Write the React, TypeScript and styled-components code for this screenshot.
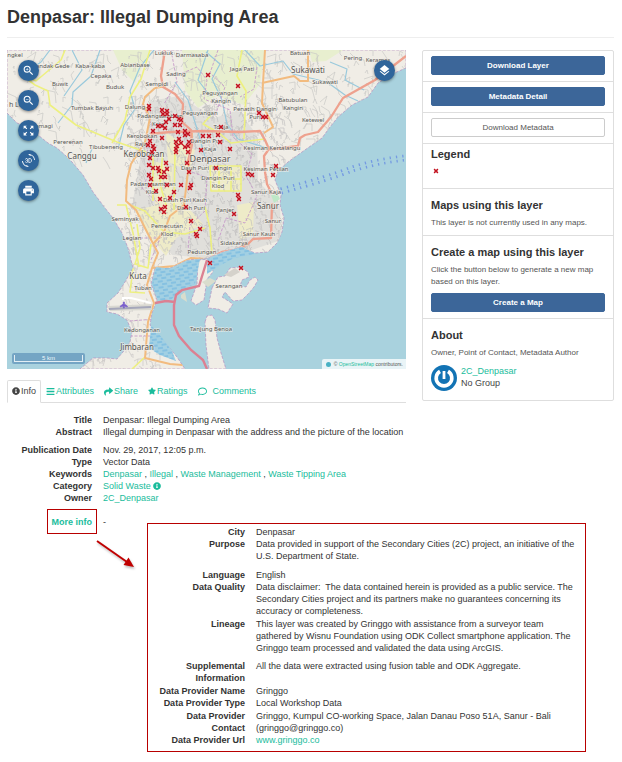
import React from 'react';
import styled, { createGlobalStyle } from 'styled-components';
import { MdZoomIn, MdZoomOut, MdZoomOutMap, Md3dRotation, MdPrint, MdLayers } from 'react-icons/md';
import { FaInfoCircle, FaBars, FaShare, FaStar, FaRegComment } from 'react-icons/fa';

const teal = '#1abc9c';
const blue = '#3c6699';
const line = '#dedede';
const red = '#b80000';

const GlobalStyle = createGlobalStyle`
  * { box-sizing: border-box; }
  body {
    margin: 0;
    background: #fff;
    color: #333;
    font-family: 'Liberation Sans', Arial, sans-serif;
    font-size: 9px;
    line-height: 12px;
  }
  a { color: ${teal}; text-decoration: none; }
`;

const Page = styled.main`
  padding: 6px 8px 8px 7px;
`;

const Title = styled.h1`
  margin: 0 0 12px;
  padding-bottom: 9px;
  border-bottom: 1px solid #eee;
  font-size: 18px;
  line-height: 22px;
`;

const Columns = styled.div`
  display: grid;
  grid-template-columns: minmax(0, 1fr) 192px;
  gap: 16px;
  align-items: start;
`;

const MapFrame = styled.section`
  position: relative;
  overflow: hidden;
`;

const MapCanvas = styled.svg`
  display: block;
  width: 100%;
  height: auto;
  font-family: 'Noto Sans', 'Open Sans', sans-serif;
`;

const ControlStack = styled.div<{ $side: 'left' | 'right' }>`
  position: absolute;
  top: 10px;
  ${(p) => p.$side}: 11px;
  display: flex;
  flex-direction: column;
  gap: 9px;
`;

const RoundButton = styled.button`
  display: flex;
  align-items: center;
  justify-content: center;
  width: 21px;
  height: 21px;
  padding: 0;
  border: 0;
  border-radius: 50%;
  background: #2f659b;
  color: #fff;
  font-size: 13px;
  box-shadow: 0 1px 3px rgba(0, 0, 0, 0.45);
`;

const ScaleBar = styled.div`
  position: absolute;
  left: 5px;
  bottom: 5px;
  width: 73px;
  padding: 2px;
  border-radius: 2px;
  background: #74a5c4;
  color: #eef6fa;
  font-size: 6px;
  line-height: 6px;
  text-align: center;
`;

const ScaleTick = styled.div`
  border: 1px solid #e2eef4;
  border-top: 0;
`;

const Attribution = styled.div`
  position: absolute;
  right: 0;
  bottom: 0;
  display: flex;
  align-items: center;
  gap: 3px;
  padding: 1px 3px 0 4px;
  border-radius: 2px 0 0 0;
  background: rgba(255, 255, 255, 0.75);
  color: #555;
  font-size: 5px;
  line-height: 9px;
`;

const Globe = styled.span`
  width: 5px;
  height: 5px;
  border-radius: 50%;
  background: #4ab1c4;
`;

const TabBar = styled.nav`
  display: flex;
  margin-top: 11px;
  border-bottom: 1px solid ${line};
`;

const Tab = styled.a<{ $active?: boolean }>`
  display: flex;
  align-items: center;
  gap: 1px;
  height: 23px;
  margin-bottom: -1px;
  padding: 0 4px 1px;
  border: 1px solid ${(p) => (p.$active ? line : 'transparent')};
  border-bottom-color: ${(p) => (p.$active ? '#fff' : 'transparent')};
  border-radius: 2px 2px 0 0;
  color: ${(p) => (p.$active ? '#444' : teal)};
`;

const Details = styled.dl`
  margin: 0;
`;

const InfoDetails = styled(Details)`
  margin-top: 11px;
`;

const Row = styled.div<{ $label: number; $after?: number }>`
  display: grid;
  grid-template-columns: ${(p) => p.$label}px minmax(0, 1fr);
  column-gap: 11px;
  margin-bottom: ${(p) => p.$after ?? 0}px;
`;

const Term = styled.dt`
  font-weight: bold;
  text-align: right;
`;

const Value = styled.dd`
  margin: 0;
  white-space: pre-line;
  svg { vertical-align: -1px; }
`;

const Sidebar = styled.aside`
  border: 1px solid ${line};
  border-radius: 2px;
`;

const Panel = styled.section<{ $kind?: 'action' | 'legend' | 'about' }>`
  padding: ${(p) =>
    p.$kind === 'action' ? '5px 8px 6px' : p.$kind === 'legend' ? '2px 8px 8px' : p.$kind === 'about' ? '8px 8px 9px' : '8px 8px 6px'};
  color: #555;
  & + & { border-top: 1px solid ${line}; }
`;

const Heading = styled.h2`
  margin: 0 0 4px;
  color: #333;
  font-size: 11px;
  line-height: 16px;
`;

const Text = styled.p`
  margin: 0;
  font-size: 8px;
`;

const Action = styled.button<{ $plain?: boolean }>`
  display: block;
  width: 100%;
  height: 19px;
  padding: 0;
  border: 1px solid ${(p) => (p.$plain ? '#ccc' : blue)};
  border-radius: 2px;
  background: ${(p) => (p.$plain ? '#fff' : blue)};
  color: ${(p) => (p.$plain ? '#555' : '#fff')};
  font: inherit;
  font-size: 8px;
  font-weight: ${(p) => (p.$plain ? 'normal' : 'bold')};
  ${Text} + & { margin-top: 5px; }
`;

const LegendIcon = styled.svg`
  display: block;
  width: 6px;
  height: 6px;
  margin: 6px 2px;
`;

const Owner = styled.div`
  display: flex;
  gap: 4px;
  margin-top: 6px;
  color: #444;
`;

const Avatar = styled.svg`
  width: 26px;
  height: 26px;
`;

const OwnerName = styled.div`
  display: flex;
  flex-direction: column;
`;

const MoreArea = styled.section`
  display: grid;
  grid-template-columns: 140px minmax(0, 1fr);
  margin: 5px 28px 0 0;
`;

const MoreSide = styled.div`
  padding-left: 40px;
`;

const MoreLine = styled.div`
  display: flex;
  align-items: center;
  gap: 6px;
`;

const MoreLink = styled.a`
  width: 50px;
  padding: 6px 4px 5px 0;
  border: 1px solid ${red};
  font-weight: bold;
  text-align: right;
`;

const Arrow = styled.svg`
  display: block;
  width: 46px;
  height: 36px;
  margin: 4px 0 0 47px;
  filter: drop-shadow(1px 2px 1px rgba(0, 0, 0, 0.25));
`;

const Callout = styled.div`
  margin-top: 14px;
  padding: 2px 2px 5px 8px;
  border: 1px solid ${red};
`;

const markers: Array<[number, number]> = [
  [208, 75], [149, 106], [149, 109], [162, 110], [167, 111], [163, 114], [167, 114], [175, 116], [181, 120],
  [169, 119], [179, 119], [166, 122], [175, 125], [180, 125], [158, 126], [162, 126], [165, 128], [153, 131],
  [162, 138], [178, 132], [185, 131], [188, 134], [185, 135], [203, 136], [209, 136], [179, 139], [150, 141],
  [148, 145], [153, 146], [154, 149], [152, 152], [176, 142], [181, 143], [177, 146], [176, 149], [176, 152],
  [185, 147], [189, 142], [188, 146], [188, 152], [201, 150], [150, 158], [149, 165], [166, 163], [187, 163],
  [153, 168], [158, 168], [159, 171], [167, 169], [164, 172], [189, 172], [149, 175], [151, 179], [161, 177],
  [165, 177], [150, 185], [167, 185], [181, 185], [191, 185], [190, 188], [156, 191], [174, 192], [160, 199],
  [170, 198], [161, 209], [165, 207], [186, 207], [164, 212], [191, 221], [200, 229], [196, 234], [197, 236],
  [238, 86], [259, 113], [263, 117], [266, 117], [221, 127], [218, 135], [220, 142], [230, 149], [216, 168],
  [248, 174], [252, 175], [276, 166], [273, 175], [238, 195], [239, 199], [234, 214], [210, 263], [241, 268],
];

const places: Array<[string, number, number, number?]> = [
  ['ngkel', 15, 57], ['Lukluk', 164, 55], ['Darmasaba', 192, 57], ['Batuan', 300, 55], ['Pering', 353, 60],
  ['Keramas', 378, 62], ['Pandak Gede', 51, 68], ['Kaba-kaba', 90, 68], ['Abianbase', 135, 67],
  ['Sading', 176, 76], ['Cepaka', 101, 78], ['Jaga Pati', 242, 71], ['Sukawati', 308, 73, 8],
  ['Sukawati', 325, 84], ['Buwit', 60, 86], ['Buduk', 115, 89], ['Sempidi', 157, 86],
  ['Peguyangan', 220, 95], ['Kangin', 221, 103], ['Penatih Dangin', 255, 111], ['Puri', 255, 119],
  ['Batubulan', 293, 102], ['Kangin', 293, 110], ['Tumbak Bayuh', 92, 110], ['Dalung', 135, 109],
  ['Peguyangan', 200, 115], ['Padangsambian', 160, 118], ['Kaja', 158, 126], ['Ketewel', 313, 122],
  ['h Lo', 16, 107, 7], ['emagi', 44, 128], ['Pererenan', 68, 144], ['Kerobokan', 142, 138],
  ['Raja', 141, 146], ['Tibubeneng', 106, 149], ['Tonja', 221, 129], ['Dangin Puri', 207, 143],
  ['Kaja', 210, 151], ['Canggu', 82, 159, 8], ['Kerobokan', 144, 157, 8], ['Denpasar', 210, 162, 9],
  ['Kesiman Kertalangu', 272, 150], ['Dauh Puri', 195, 170], ['Kangin', 222, 170], ['Kesiman Petilan', 266, 171],
  ['Dangin Puri', 218, 180], ['Klod', 218, 188], ['Padangsambian', 153, 186], ['Klod', 152, 194],
  ['Dauh Puri Kauh', 185, 202], ['Dauh Puri', 191, 210], ['Sanur Kaja', 266, 194], ['Sanur', 268, 209, 8],
  ['Panjer', 225, 212], ['Sanur', 273, 223], ['Seminyak', 125, 221], ['Pemecutan', 167, 228],
  ['Klod', 167, 236], ['Legian', 132, 240], ['Sanur Kauh', 259, 236], ['Sidakarya', 234, 245],
  ['Pedungan', 202, 254], ['Kuta', 138, 279, 8], ['Tuban', 143, 290], ['Serangan', 229, 288],
  ['Kedonganan', 142, 332], ['Jimbaran', 137, 350, 8], ['Tanjung Benoa', 211, 331],
];

const mainland =
  'M7 50V113L17 123L30 128L38 135L48 143L57 148L65 155L72 162L83 175L93 192L105 208L113 218L122 233L128 248L133 268L125 282L118 293L107 303V312L117 314L127 320L132 332L130 342L123 352L117 359L107 358L93 358L80 369H185L177 357L167 345L157 334L150 325L152 313L157 300L151 284L155 268L170 268L187 260L207 258L222 252L240 247L255 253L268 252L277 243L282 232L284 218L280 205L281 195L275 180L278 171L288 162L302 152L322 138L330 127L338 117L352 105L368 97L378 83L392 74L406 68V50Z';
const serangan =
  'M212 288L218 277L225 276L230 268L240 267L248 272L249 277L242 280L240 286L246 287L250 280L255 277L258 280L254 287L249 293L242 300L233 301L225 292L222 297L233 304L227 313L218 309L208 308Z';
const benoa = 'M205 322L207 316L212 315L215 320L217 338L221 353L226 369H209L206 345Z';
const harbour = 'M198 260L211 259L213 272L207 279L204 300L196 305L191 301L197 284Z';
const mangroves = 'M156 267L174 269L188 261L200 259L195 284L180 290L170 301L158 300L152 284ZM151 325L163 339L172 351L176 361L160 355L149 348ZM207 260L222 253L242 247L256 254L234 258L219 266L207 274Z';

const redRoads =
  'M165 50L161 76L163 87L175 94L183 104L182 122L191 130L192 145L187 165M150 134L170 132L205 131L240 132L260 131L265 140L269 149L264 156L265 172L267 184L272 194M267 150L298 146L300 138L305 135L318 132L331 117L343 98L375 80L406 56M206 260L222 252L235 250L248 244L253 239L271 238L272 203';
const orangeRoads =
  'M155 88L145 97L143 104L150 118L145 142L131 164L127 180L126 201L136 210L147 232L158 253L152 268L147 285L154 303L148 322L145 358L170 364L207 367M155 88L166 86M152 268L175 266L191 258L207 259M265 50L263 83L262 103L273 127L264 133M262 83L294 76L300 81L308 81L308 50M192 133L190 155L187 180L184 205L170 216L164 232L153 244';
const yellowRoads =
  'M65 50L61 60L36 81L22 75L35 85L48 91L50 105L76 125L117 142L146 152M112 143L125 120L130 97L141 79L150 50M117 205L126 205L133 233L139 267M130 205L145 211L164 232L185 234L205 228M137 224L140 248L135 264L148 268L151 244M205 207L210 228L212 255M242 50L237 76L246 91L244 139M211 115L203 124L219 133L231 143L265 139M210 166L241 166V191L211 191ZM219 166V191M231 166V191M211 179H241M145 357L132 369M133 268L130 292L145 293M153 150V201M163 152L160 184L166 205M175 150L174 210';
const rivers =
  'M100 50L91 76L73 92L72 105L58 123M154 50L140 67L130 91L135 109L124 125L118 149M50 50L41 62L34 67M206 52L220 64L212 79L222 100L227 124L238 139L270 149M245 50L260 66L283 61L293 74L327 82L345 95L358 101M330 62L347 69L345 80L364 90M175 82L188 100L198 132L205 157M72 50L82 70L64 96M208 50L198 80L210 96M92 149L86 163';

let seed = 41;
const random = () => {
  seed = (seed * 16807) % 2147483647;
  return seed / 2147483647;
};

const streets = (count: number, x: number, y: number, w: number, h: number, size: number) => {
  let d = '';
  for (let i = 0; i < count; i += 1) {
    const sx = Math.round(x + random() * w);
    const sy = Math.round(y + random() * h);
    const a = Math.round((random() - 0.3) * size);
    const b = Math.round((random() - 0.5) * size);
    d += `M${sx} ${sy}l${a} ${b}l${Math.round(b / 2)} ${Math.abs(a) + 2}`;
  }
  return d;
};

const countryStreets = streets(420, 7, 50, 400, 110, 13);
const cityStreets = streets(850, 125, 95, 158, 165, 7);
const southStreets = streets(190, 85, 205, 80, 165, 8);

const Cross = ({ x, y }: { x: number; y: number }) => (
  <g>
    <rect x={x - 2} y={y - 2} width="4" height="4" fill="#e08080" opacity="0.6" />
    <path d={`M${x - 2} ${y - 2}l4 4m0 -4l-4 4`} stroke="#c2101f" strokeWidth="1.1" />
  </g>
);

const CityMap = () => (
  <MapCanvas viewBox="7 50 399 319" role="img" aria-label="Map of Denpasar">
    <defs>
      <clipPath id="land"><path d={mainland} /></clipPath>
      <pattern id="wetland" width="9" height="6" patternUnits="userSpaceOnUse" patternTransform="rotate(-8)">
        <path d="M0 1h5M4 4h5" stroke="#5aa9de" strokeWidth="0.8" />
      </pattern>
    </defs>
    <path d="M7 50h399v319H7Z" fill="#a9d2de" />
    <g fill="#f0ede6" stroke="#b58fc0" strokeWidth="0.7" strokeDasharray="3 1.5">
      <path d={mainland} />
      <path d={serangan} />
      <path d={benoa} />
      <path d={harbour} />
    </g>
    <g clipPath="url(#land)" fill="none" strokeLinejoin="round">
      <path d="M182 50H265L260 84L244 105L216 96L198 108L185 90ZM309 50H343L326 61L312 62ZM113 50H150L135 83L122 70Z" fill="#e8efcf" />
      <path d="M150 101L179 96L215 118L238 110L257 135L258 181L280 204L281 240L252 250L206 258L172 255L146 222L132 206L140 160L146 141Z" fill="#e0dfdb" />
      <path d="M137 210L180 199L203 224L176 238L166 256L145 230ZM237 205L254 202L253 235L240 240ZM154 161L173 167L171 208L155 208ZM211 166H241V191H211ZM166 133L195 150L190 171L168 162Z" fill="#eeebc8" />
      <path d={countryStreets} stroke="#c9c8c5" strokeWidth="0.7" />
      <path d={cityStreets} stroke="#c3c2c1" strokeWidth="0.7" />
      <path d={southStreets} stroke="#cac7c5" strokeWidth="0.7" />
      <path d={rivers} stroke="#99c9dc" strokeWidth="1.2" />
      <path d="M178 75L197 67L207 80L204 99L230 110L233 137L252 154L246 176L257 196L245 223L226 218L218 241M142 104L154 130L147 152L152 168L142 188L159 204M171 50L177 82L164 104M218 50L210 73L225 87L215 116M188 171L207 177L205 211L190 225L188 251M122 238H160L151 260M130 321L155 319M130 336H151M257 67L254 89L240 97" stroke="#c69ac9" strokeWidth="0.9" strokeDasharray="3 1.5" />
      <path d={yellowRoads} stroke="#edf080" strokeWidth="1.6" />
      <path d={orangeRoads} stroke="#f2bb7f" strokeWidth="2" />
      <path d={redRoads} stroke="#eea18e" strokeWidth="2.3" />
    </g>
    <path d={mangroves} fill="#a2d0e3" />
    <path d={mangroves} fill="url(#wetland)" />
    <path d="M108 306L152 304V310L110 311Z" fill="#d9d8d1" />
    <path d="M109 309L151 307" stroke="#a5a7ba" strokeWidth="1.8" />
    <path d="M123 300V298H131L151 303" fill="none" stroke="#fff" strokeWidth="2" />
    <path d="M124.3 302v2l3 2v1l-3-1v2h-1v-2l-3 1v-1l3-2v-2z" fill="#785dcc" stroke="#785dcc" strokeWidth="0.7" />
    <path d="M207 260L203 273L199 286L182 290L176 295L174 305V325L179 336L191 350L203 360L207 369M155 303L166 301L175 302" fill="none" stroke="#dc8092" strokeWidth="2.4" />
    <path d="M181 295L185 292L187 302L181 298ZM202 282L210 278L216 281L208 287Z" fill="#d9ddcd" />
    <path d="M224 275L235 268L240 272L231 277Z" fill="#d5d2cb" />
    <path d="M271 195L277 193L280 199L274 203Z" fill="#bee8c7" />
    <path d="M281 191Q330 178 352 169Q378 161 405 158" fill="none" stroke="#759be2" strokeWidth="7" strokeDasharray="1.3 5" />
    <path d="M281 191Q330 178 352 169Q378 161 405 158" fill="none" stroke="#a9d2de" strokeWidth="1.3" />
    <g fill="#565552" stroke="#f4f1eb" strokeWidth="1.3" strokeOpacity="0.7" paintOrder="stroke" textAnchor="middle">
      {places.map(([name, x, y, size = 6]) => (
        <text key={`${name}-${x}-${y}`} x={x} y={y} fontSize={size}>{name}</text>
      ))}
    </g>
    {markers.map(([x, y]) => <Cross key={`${x}-${y}`} x={x} y={y} />)}
  </MapCanvas>
);

const MapView = () => (
  <MapFrame>
    <CityMap />
    <ControlStack $side="left">
      <RoundButton aria-label="Zoom in"><MdZoomIn /></RoundButton>
      <RoundButton aria-label="Zoom out"><MdZoomOut /></RoundButton>
      <RoundButton aria-label="Full extent"><MdZoomOutMap /></RoundButton>
      <RoundButton aria-label="3D view"><Md3dRotation /></RoundButton>
      <RoundButton aria-label="Print"><MdPrint /></RoundButton>
    </ControlStack>
    <ControlStack $side="right">
      <RoundButton aria-label="Layers"><MdLayers /></RoundButton>
    </ControlStack>
    <ScaleBar><ScaleTick>5 km</ScaleTick></ScaleBar>
    <Attribution><Globe /><span>© <a href="#osm">OpenStreetMap</a> contributors.</span></Attribution>
  </MapFrame>
);

const InfoList = () => (
  <InfoDetails>
    <Row $label={85}><Term>Title</Term><Value>Denpasar: Illegal Dumping Area</Value></Row>
    <Row $label={85} $after={6}><Term>Abstract</Term><Value>Illegal dumping in Denpasar with the address and the picture of the location</Value></Row>
    <Row $label={85}><Term>Publication Date</Term><Value>Nov. 29, 2017, 12:05 p.m.</Value></Row>
    <Row $label={85}><Term>Type</Term><Value>Vector Data</Value></Row>
    <Row $label={85}>
      <Term>Keywords</Term>
      <Value>
        <a href="#denpasar">Denpasar</a> , <a href="#illegal">Illegal</a> , <a href="#management">Waste Management</a> , <a href="#tipping">Waste Tipping Area</a>
      </Value>
    </Row>
    <Row $label={85}><Term>Category</Term><Value><a href="#solid-waste">Solid Waste <FaInfoCircle size={8} /></a></Value></Row>
    <Row $label={85}><Term>Owner</Term><Value><a href="#owner">2C_Denpasar</a></Value></Row>
  </InfoDetails>
);

const extra: Array<{ term: string; value: React.ReactNode; after?: number }> = [
  { term: 'City', value: 'Denpasar' },
  { term: 'Purpose', value: 'Data provided in support of the Secondary Cities (2C) project, an initiative of the\nU.S. Department of State.', after: 7 },
  { term: 'Language', value: 'English' },
  { term: 'Data Quality', value: 'Data disclaimer:\u00a0 The data contained herein is provided as a public service. The\nSecondary Cities project and its partners make no guarantees concerning its\naccuracy or completeness.', after: 1 },
  { term: 'Lineage', value: 'This layer was created by Gringgo with assistance from a surveyor team\ngathered by Wisnu Foundation using ODK Collect smartphone application. The\nGringgo team processed and validated the data using ArcGIS.', after: 6 },
  { term: 'Supplemental Information', value: 'All the data were extracted using fusion table and ODK Aggregate.', after: 1 },
  { term: 'Data Provider Name', value: 'Gringgo' },
  { term: 'Data Provider Type', value: 'Local Workshop Data', after: 1 },
  { term: 'Data Provider Contact', value: 'Gringgo, Kumpul CO-working Space, Jalan Danau Poso 51A, Sanur - Bali\n(gringgo@gringgo.co)' },
  { term: 'Data Provider Url', value: <a href="#gringgo">www.gringgo.co</a> },
];

export default function App() {
  return (
    <>
      <GlobalStyle />
      <Page>
        <Title>Denpasar: Illegal Dumping Area</Title>
        <Columns>
          <div>
            <MapView />
            <TabBar>
              <Tab href="#info" $active><FaInfoCircle size={8} />Info</Tab>
              <Tab href="#attributes"><FaBars size={9} />Attributes</Tab>
              <Tab href="#share"><FaShare size={9} />Share</Tab>
              <Tab href="#ratings"><FaStar size={8} />Ratings</Tab>
              <Tab href="#comments"><FaRegComment size={9} />&nbsp; Comments</Tab>
            </TabBar>
            <InfoList />
          </div>
          <Sidebar>
            <Panel $kind="action"><Action>Download Layer</Action></Panel>
            <Panel $kind="action"><Action>Metadata Detail</Action></Panel>
            <Panel $kind="action"><Action $plain>Download Metadata</Action></Panel>
            <Panel $kind="legend">
              <Heading>Legend</Heading>
              <LegendIcon viewBox="-3 -3 6 6" aria-label="Dumping site"><Cross x={0} y={0} /></LegendIcon>
            </Panel>
            <Panel>
              <Heading>Maps using this layer</Heading>
              <Text>This layer is not currently used in any maps.</Text>
            </Panel>
            <Panel>
              <Heading>Create a map using this layer</Heading>
              <Text>Click the button below to generate a new map based on this layer.</Text>
              <Action>Create a Map</Action>
            </Panel>
            <Panel $kind="about">
              <Heading>About</Heading>
              <Text>Owner, Point of Contact, Metadata Author</Text>
              <Owner>
                <Avatar viewBox="0 0 26 26" aria-hidden="true">
                  <circle cx="13" cy="13" r="13" fill="#1273b4" />
                  <path d="M9 6.4A7.8 7.8 0 1 0 17 6.4" fill="none" stroke="#fff" strokeWidth="3.6" />
                  <path d="M13 6v8" stroke="#fff" strokeWidth="2.8" />
                </Avatar>
                <OwnerName><a href="#owner">2C_Denpasar</a><span>No Group</span></OwnerName>
              </Owner>
            </Panel>
          </Sidebar>
        </Columns>
        <MoreArea>
          <MoreSide>
            <MoreLine><MoreLink href="#more">More info</MoreLink>-</MoreLine>
            <Arrow viewBox="0 0 46 36" aria-hidden="true">
              <path d="M3 3L33 24" stroke="#c00000" strokeWidth="2" />
              <path d="M40 29L29.5 27L34.5 19.5Z" fill="#c00000" />
            </Arrow>
          </MoreSide>
          <Callout>
            <Details>
              {extra.map((item) => (
                <Row key={item.term} $label={89} $after={item.after}>
                  <Term>{item.term}</Term>
                  <Value>{item.value}</Value>
                </Row>
              ))}
            </Details>
          </Callout>
        </MoreArea>
      </Page>
    </>
  );
}
